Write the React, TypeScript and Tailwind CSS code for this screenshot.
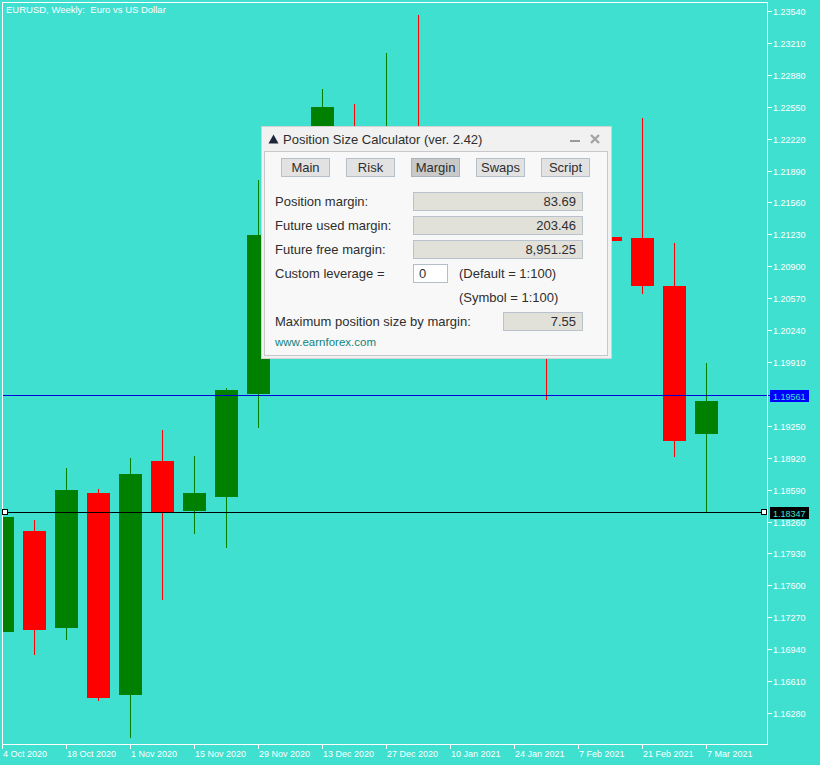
import React from "react";

type Candle = [number, number, number, number, number, "g" | "r"];

const candles: Candle[] = [
  [2, 517, 517, 632, 632, "g"],
  [34, 520, 531, 630, 655, "r"],
  [66, 468, 490, 628, 640, "g"],
  [98, 489, 493, 698, 701, "r"],
  [130, 458, 474, 695, 738, "g"],
  [162, 430, 461, 512, 600, "r"],
  [194, 456, 493, 511, 534, "g"],
  [226, 388, 390, 497, 548, "g"],
  [258, 180, 235, 394, 428, "g"],
  [290, 200, 215, 240, 300, "r"],
  [322, 89, 107, 220, 240, "g"],
  [354, 104, 140, 200, 250, "r"],
  [386, 53, 140, 190, 260, "g"],
  [418, 15, 150, 250, 300, "r"],
  [450, 180, 200, 260, 320, "r"],
  [482, 200, 220, 280, 330, "g"],
  [514, 190, 210, 270, 320, "r"],
  [546, 200, 230, 330, 400, "r"],
  [578, 150, 200, 239, 280, "g"],
  [610, 200, 237, 241, 260, "r"],
  [642, 118, 238, 286, 294, "r"],
  [674, 243, 286, 441, 457, "r"],
  [706, 363, 401, 434, 512, "g"],
];

const dates = [
  "4 Oct 2020",
  "18 Oct 2020",
  "1 Nov 2020",
  "15 Nov 2020",
  "29 Nov 2020",
  "13 Dec 2020",
  "27 Dec 2020",
  "10 Jan 2021",
  "24 Jan 2021",
  "7 Feb 2021",
  "21 Feb 2021",
  "7 Mar 2021",
];

const FONT = "'Liberation Sans', Arial, sans-serif";

function Chart() {
  const prices: { y: number; label: string }[] = [];
  for (let i = 0; i <= 22; i++) {
    if (i === 12) continue;
    const p = 1.2354 - i * 0.0033;
    prices.push({ y: Math.round(11 + i * 31.91), label: p.toFixed(5) });
  }
  return (
    <svg width={820} height={765} className="block" style={{ fontFamily: FONT }}>
      <defs>
        <clipPath id="plot">
          <rect x={3} y={3} width={764} height={741} />
        </clipPath>
      </defs>
      <rect x={0} y={0} width={820} height={765} fill="#40e0d0" />
      <g clipPath="url(#plot)" shapeRendering="crispEdges">
        {candles.map(([x, hi, top, bot, lo, c], i) => {
          const col = c === "g" ? "#008000" : "#ff0000";
          return (
            <g key={i}>
              <rect x={x} y={hi} width={1} height={lo - hi} fill={col} />
              <rect x={x - 11} y={top} width={23} height={Math.max(1, bot - top)} fill={col} />
            </g>
          );
        })}
        <rect x={3} y={395} width={764} height={1} fill="#0000d8" />
        <rect x={3} y={512} width={764} height={1} fill="#000000" />
      </g>
      {/* frame */}
      <g shapeRendering="crispEdges" fill="#ffffff">
        <rect x={2} y={2} width={766} height={1} />
        <rect x={2} y={2} width={1} height={743} />
        <rect x={767} y={2} width={1} height={743} />
        <rect x={2} y={744} width={766} height={1} />
      </g>
      {/* line anchors */}
      <rect x={2.5} y={509.5} width={5} height={5} fill="#fff" stroke="#000" strokeWidth={1} shapeRendering="crispEdges" />
      <rect x={761.5} y={509.5} width={5} height={5} fill="#fff" stroke="#000" strokeWidth={1} shapeRendering="crispEdges" />
      {/* title */}
      <text x={6} y={12.5} fontSize={9.5} fill="#ffffff">
        EURUSD, Weekly:{"\u00a0\u00a0"}Euro vs US Dollar
      </text>
      {/* price axis */}
      {prices.map((p) => (
        <g key={p.label}>
          <rect x={768} y={p.y} width={4} height={1} fill="#fff" shapeRendering="crispEdges" />
          <text x={773} y={p.y + 3.5} fontSize={9} fill="#ffffff">
            {p.label}
          </text>
        </g>
      ))}
      <rect x={768} y={395} width={2} height={1} fill="#0000d8" />
      <rect x={770} y={390} width={39} height={12} fill="#0000ff" shapeRendering="crispEdges" />
      <text x={773} y={399.5} fontSize={9} fill="#40e0d0">
        1.19561
      </text>
      <rect x={770} y={507} width={39} height={12} fill="#000000" shapeRendering="crispEdges" />
      <text x={773} y={516.5} fontSize={9} fill="#40e0d0">
        1.18347
      </text>
      {/* date axis */}
      {dates.map((d, i) => {
        const x = 2 + i * 64;
        return (
          <g key={d}>
            <rect x={x} y={745} width={1} height={4} fill="#fff" shapeRendering="crispEdges" />
            <text x={x + 1} y={757} fontSize={9} fill="#ffffff">
              {d}
            </text>
          </g>
        );
      })}
    </svg>
  );
}

function Btn({ label, active }: { label: string; active?: boolean }) {
  return (
    <div
      className={
        active
          ? "w-[49px] h-[19px] flex items-center justify-center border border-[#aab4be] bg-[#c9c9c9] text-[13px] leading-none"
          : "w-[49px] h-[19px] flex items-center justify-center border border-[#b6c0ca] bg-[#e2e2e2] text-[13px] leading-none"
      }
    >
      {label}
    </div>
  );
}

function ValueRow({ label, value }: { label: string; value: string }) {
  return (
    <div className="flex items-center h-[19px]">
      <div className="w-[138px]">{label}</div>
      <div className="w-[170px] h-[19px] border border-[#b8c3cd] bg-[#e1e0d9] flex items-center justify-end pr-[6px]">
        {value}
      </div>
    </div>
  );
}

function Dialog() {
  return (
    <div
      className="absolute left-[261px] top-[126px] w-[351px] h-[233px] bg-[#f1f1f1] border border-[#d2d2d2] flex flex-col text-[13px] leading-none text-[#2e2e2e]"
      style={{ fontFamily: FONT }}
    >
      <div className="h-[24px] flex items-center pl-[6px] pr-[7px] shrink-0">
        <svg width={11} height={10} className="mr-[4px]">
          <polygon points="5.5,0.5 10.5,9.5 0.5,9.5" fill="#1d2738" />
        </svg>
        <span>Position Size Calculator (ver. 2.42)</span>
        <div className="flex-1" />
        <svg width={36} height={14}>
          <rect x={2} y={8} width={10} height={2} fill="#9a9a9a" />
          <path d="M23 3 L31 11 M31 3 L23 11" stroke="#a4a4a4" strokeWidth={2.4} />
        </svg>
      </div>
      <div className="flex-1 ml-[2px] mr-[3px] mb-[2px] border border-[#c8c8c8] bg-[#f8f8f8] flex flex-col">
        <div className="flex gap-[16px] pl-[16px] pt-[6px]">
          <Btn label="Main" />
          <Btn label="Risk" />
          <Btn label="Margin" active />
          <Btn label="Swaps" />
          <Btn label="Script" />
        </div>
        <div className="flex flex-col gap-[5px] pl-[10px] mt-[15px]">
          <ValueRow label="Position margin:" value="83.69" />
          <ValueRow label="Future used margin:" value="203.46" />
          <ValueRow label="Future free margin:" value="8,951.25" />
          <div className="flex items-center h-[19px]">
            <div className="w-[138px]">Custom leverage =</div>
            <div className="w-[35px] h-[19px] border border-[#b4bec8] bg-white flex items-center pl-[5px]">0</div>
            <div className="ml-[11px]">(Default = 1:100)</div>
          </div>
          <div className="flex items-center h-[19px] pl-[184px]">(Symbol = 1:100)</div>
          <div className="flex items-center h-[19px]">
            <div className="w-[228px]">Maximum position size by margin:</div>
            <div className="w-[80px] h-[19px] border border-[#b8c3cd] bg-[#e1e0d9] flex items-center justify-end pr-[6px]">
              7.55
            </div>
          </div>
          <div className="text-[11.5px] text-[#10847f] mt-[1px]">www.earnforex.com</div>
        </div>
      </div>
    </div>
  );
}

export default function App() {
  return (
    <div className="relative w-[820px] h-[765px] overflow-hidden bg-[#40e0d0]">
      <Chart />
      <Dialog />
    </div>
  );
}
